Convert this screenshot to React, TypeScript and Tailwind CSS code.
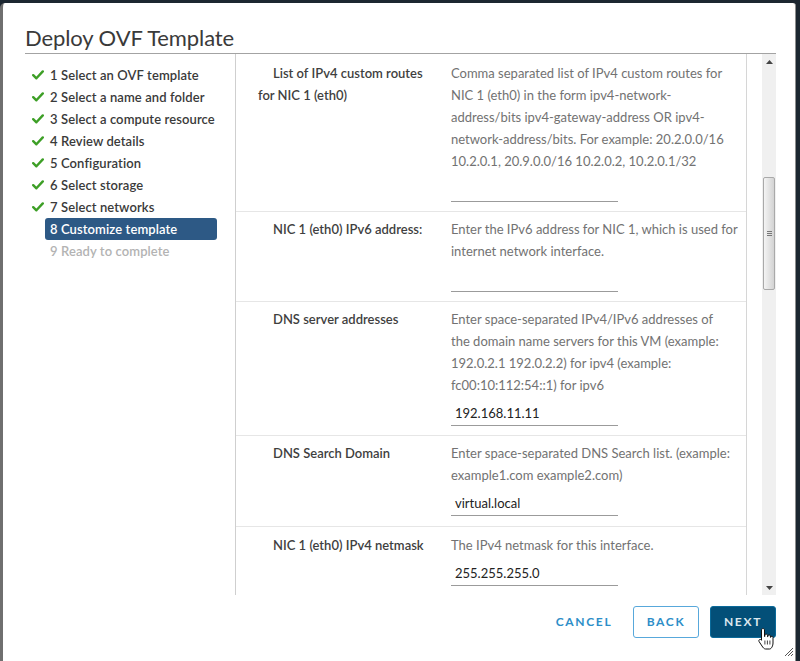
import React from "react";

const font = { fontFamily: "Lato, 'Open Sans', 'Liberation Sans', sans-serif" };

function Check() {
  return (
    <svg width="12" height="10" viewBox="0 0 12 10" className="shrink-0">
      <path d="M1.2 5.2 L4.4 8.3 L10.8 1.4" fill="none" stroke="#3d9f26" strokeWidth="2.4" strokeLinecap="round" strokeLinejoin="round" />
    </svg>
  );
}

const steps = [
  { t: "1 Select an OVF template", s: "done" },
  { t: "2 Select a name and folder", s: "done" },
  { t: "3 Select a compute resource", s: "done" },
  { t: "4 Review details", s: "done" },
  { t: "5 Configuration", s: "done" },
  { t: "6 Select storage", s: "done" },
  { t: "7 Select networks", s: "done" },
  { t: "8 Customize template", s: "active" },
  { t: "9 Ready to complete", s: "todo" },
];

type Row = { label: string[]; desc: string[]; value: string; cls: string };

const rows: Row[] = [
  {
    label: ["List of IPv4 custom routes", "for NIC 1 (eth0)"],
    desc: [
      "Comma separated list of IPv4 custom routes for",
      "NIC 1 (eth0) in the form ipv4-network-",
      "address/bits ipv4-gateway-address OR ipv4-",
      "network-address/bits. For example: 20.2.0.0/16",
      "10.2.0.1, 20.9.0.0/16 10.2.0.2, 10.2.0.1/32",
    ],
    value: "",
    cls: "pt-[6px] pb-[9px]",
  },
  {
    label: ["NIC 1 (eth0) IPv6 address:"],
    desc: ["Enter the IPv6 address for NIC 1, which is used for", "internet network interface."],
    value: "",
    cls: "pt-[6px] pb-[9px]",
  },
  {
    label: ["DNS server addresses"],
    desc: [
      "Enter space-separated IPv4/IPv6 addresses of",
      "the domain name servers for this VM (example:",
      "192.0.2.1 192.0.2.2) for ipv4 (example:",
      "fc00:10:112:54::1) for ipv6",
    ],
    value: "192.168.11.11",
    cls: "pt-[6px] pb-[9px]",
  },
  {
    label: ["DNS Search Domain"],
    desc: ["Enter space-separated DNS Search list. (example:", "example1.com example2.com)"],
    value: "virtual.local",
    cls: "pt-[6px] pb-[10px]",
  },
  {
    label: ["NIC 1 (eth0) IPv4 netmask"],
    desc: ["The IPv4 netmask for this interface."],
    value: "255.255.255.0",
    cls: "pt-[7px] pb-[9px]",
  },
];

function HandCursor() {
  return (
    <svg width="18" height="24" viewBox="0 0 18 24" className="absolute left-[757px] top-[627px]">
      <path
        d="M6 1.5c.8 0 1.5.7 1.5 1.5v6.5h.4V8.3c0-.7.6-1.2 1.3-1.2s1.3.5 1.3 1.2v1.4h.4V9c0-.7.6-1.1 1.3-1.1s1.2.5 1.2 1.1v1.3h.4c0-.6.5-1 1.1-1s1.1.5 1.1 1.1V16c0 2.8-1.6 6-3.4 6H8.6C7 22 6 20.5 5 19L2.1 14.6c-.5-.7-.3-1.6.4-2 .6-.4 1.4-.2 1.8.4l.2.3V3c0-.8.7-1.5 1.5-1.5z"
        fill="#fff"
        stroke="#111"
        strokeWidth="1"
        strokeLinejoin="round"
      />
      <path d="M7.9 13.5v4M10.4 13.5v4M12.9 13.5v4" stroke="#111" strokeWidth="0.8" />
    </svg>
  );
}

export default function App() {
  return (
    <div className="relative w-[800px] h-[661px] overflow-hidden bg-[#1c2731] pt-[3px] pr-[4px]" style={font}>
      <div className="h-[658px] bg-white rounded-tl-[5px] rounded-tr-[3px] border-l-[3px] border-l-[#6f6f6f] border-r border-r-[#8e8e8e] flex flex-col">
        {/* Header */}
        <div className="ml-[22px] mr-[19px] h-[51px] pt-[21px] border-b border-[#a3a3a3]">
          <div className="text-[22px] leading-[28px] text-[#3a3a3a] tracking-[-0.1px]">Deploy OVF Template</div>
        </div>

        {/* Body */}
        <div className="flex h-[541px]">
          {/* Nav */}
          <div className="w-[233px] border-r border-[#cfcfcf] pt-[10px] pl-[29px]">
            {steps.map((s) => (
              <div key={s.t} className="flex items-center h-[22px]">
                <div className="w-[12px] flex items-center">{s.s === "done" ? <Check /> : null}</div>
                <div
                  className={
                    "ml-[1px] w-[172px] h-[22px] px-[5px] rounded-[3px] text-[13px] leading-[22px] font-semibold whitespace-nowrap tracking-[0.1px] " +
                    (s.s === "active"
                      ? "bg-[#2d5985] text-white"
                      : s.s === "todo"
                      ? "text-[#b3b3b3]"
                      : "text-[#3a3a3a]")
                  }
                >
                  {s.t}
                </div>
              </div>
            ))}
          </div>

          {/* Scroll area */}
          <div className="flex flex-1">
            <div className="w-[511px] border-r border-[#d6d6d6] overflow-hidden pt-[2px]">
              {rows.map((r, i) => (
                <div key={i} className={"flex pl-[22px] border-b border-[#e6e6e6] " + r.cls}>
                  <div className="w-[193px] shrink-0 text-[13px] leading-[22px] font-semibold text-[#3f3f3f] whitespace-nowrap">
                    {r.label.map((l, j) => (
                      <div key={j} className={j === 0 ? "pl-[15px]" : ""}>
                        {l}
                      </div>
                    ))}
                  </div>
                  <div className="flex-1">
                    <div className="text-[13px] leading-[22px] text-[#727272] whitespace-nowrap">
                      {r.desc.map((d, j) => (
                        <div key={j}>{d}</div>
                      ))}
                    </div>
                    <div className="mt-[4px] w-[167px] h-[26px] border-b border-[#9b9b9b] pl-[4px] pt-[3px] text-[13px] leading-[20px] text-[#222]">
                      {r.value}
                    </div>
                  </div>
                </div>
              ))}
            </div>
            {/* Scrollbar */}
            <div className="ml-[15px] w-[14px] bg-[#f0f0f0] flex flex-col items-center">
              <div className="h-[15px] flex items-center justify-center">
                <svg width="7" height="4" viewBox="0 0 7 4">
                  <path d="M0 4 L3.5 0 L7 4 Z" fill="#444" />
                </svg>
              </div>
              <div className="h-[108px]" />
              <div className="w-[12px] h-[113px] rounded-[2px] border border-[#a9a9a9] bg-gradient-to-r from-[#f4f4f4] to-[#d3d3d3] flex flex-col items-center justify-center gap-[1px]">
                <div className="w-[5px] h-[1px] bg-[#777]" />
                <div className="w-[5px] h-[1px] bg-[#777]" />
                <div className="w-[5px] h-[1px] bg-[#777]" />
              </div>
              <div className="flex-1" />
              <div className="h-[15px] flex items-center justify-center">
                <svg width="7" height="4" viewBox="0 0 7 4">
                  <path d="M0 0 L3.5 4 L7 0 Z" fill="#444" />
                </svg>
              </div>
            </div>
          </div>
        </div>

        {/* Footer */}
        <div className="flex-1 flex justify-end items-start pt-[11px] pr-[19px] gap-[11px]">
          <button className="w-[76px] h-[32px] text-[12px] font-bold tracking-[0.14em] text-[#2d8ec8]">CANCEL</button>
          <button className="w-[66px] h-[32px] rounded-[3px] border border-[#58a8db] text-[12px] font-bold tracking-[0.14em] text-[#2d8ec8]">
            BACK
          </button>
          <button className="w-[66px] h-[32px] rounded-[3px] bg-[#034f78] border border-[#0a6a9a] text-[12px] font-bold tracking-[0.14em] text-[#dde7ee]">
            NEXT
          </button>
        </div>
      </div>

      {/* Resize grip */}
      <svg width="8" height="8" viewBox="0 0 8 8" className="absolute left-[785px] top-[648px]">
        <path d="M8 0 L0 8 M8 3 L3 8 M8 6 L6 8" stroke="#555" strokeWidth="1" />
      </svg>
      <HandCursor />
    </div>
  );
}
